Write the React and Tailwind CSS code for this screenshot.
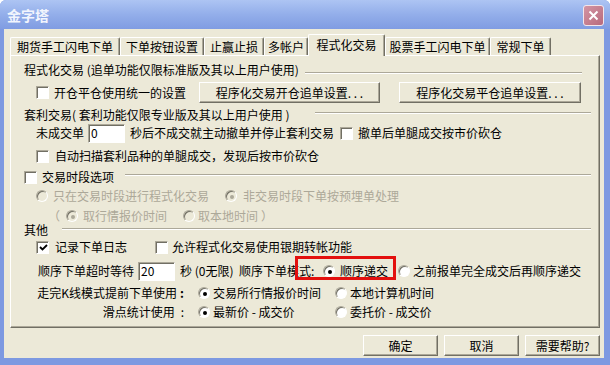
import React from 'react';

const Check = ({ checked, className = '' }) => (
  <span className={`flex h-[13px] w-[13px] shrink-0 items-center justify-center border border-t-[#aca899] border-l-[#aca899] border-r-white border-b-white bg-white shadow-[inset_1px_1px_0_#716f64] ${className}`}>
    {checked && (
      <svg width="9" height="9" viewBox="0 0 9 9" className="ml-px mt-px">
        <path d="M1 4 L3.5 6.5 L8 2" fill="none" stroke="#000" strokeWidth="1.8" />
      </svg>
    )}
  </span>
);

const Radio = ({ checked, disabled, className = '' }) => (
  <span className={`flex h-[12px] w-[12px] shrink-0 items-center justify-center rounded-full border border-t-[#aca899] border-l-[#aca899] border-r-white border-b-white shadow-[inset_1px_1px_0_#716f64] ${disabled ? 'bg-[#ece9d8]' : 'bg-white'} ${className}`}>
    {checked && <span className={`ml-px mt-px h-[4px] w-[4px] rounded-full ${disabled ? 'bg-[#aca899]' : 'bg-black'}`} />}
  </span>
);

const Etch = ({ className = '' }) => (
  <div className={`h-[2px] border-t border-b border-t-[#aca899] border-b-white ${className}`} />
);

const Btn = ({ children, className = '' }) => (
  <div className={`flex h-[21px] items-center justify-center border border-t-white border-l-white border-r-[#716f64] border-b-[#716f64] bg-[#ece9d8] shadow-[inset_-1px_-1px_0_#aca899] ${className}`}>
    {children}
  </div>
);

const Field = ({ value, className = '' }) => (
  <div className={`flex h-[19px] items-center border border-t-[#aca899] border-l-[#aca899] border-r-white border-b-white bg-white pl-[2px] shadow-[inset_1px_1px_0_#716f64] ${className}`}>
    {value}
  </div>
);

const tabs = [
  { label: '期货手工闪电下单', w: 'w-[110px]' },
  { label: '下单按钮设置', w: 'w-[84px]' },
  { label: '止赢止损', w: 'w-[60px]' },
  { label: '多帐户', w: 'w-[44px]' },
  { label: '程式化交易', w: 'w-[77px]', active: true },
  { label: '股票手工闪电下单', w: 'w-[105px]' },
  { label: '常规下单', w: 'w-[61px]' },
];

export default function App() {
  return (
    <div className="flex h-[365px] w-[610px] flex-col overflow-hidden rounded-t-[6px] bg-[#7d99e1] font-['Noto_Sans_CJK_SC','Noto_Sans',sans-serif] text-[12px] leading-[14px] text-black">
      {/* title bar */}
      <div className="flex h-[29px] shrink-0 items-center bg-gradient-to-b from-[#adc4f3] via-[#93aeea] to-[#809ce2]">
        <span className="pl-[7px] text-[14px] font-bold text-[#f2f5fd]">金字塔</span>
        <div className="ml-auto mr-[6px] mt-[2px] flex h-[21px] w-[21px] items-center justify-center rounded-[3px] border border-[#f3e6ea] bg-gradient-to-br from-[#d395a4] to-[#b86a7d]">
          <svg width="11" height="11" viewBox="0 0 11 11">
            <path d="M1.5 1.5 L9.5 9.5 M9.5 1.5 L1.5 9.5" stroke="#fff" strokeWidth="2" />
          </svg>
        </div>
      </div>

      {/* dialog body */}
      <div className="mb-[7px] ml-[4px] mr-[6px] flex flex-1 flex-col bg-[#ece9d8] pt-[5px]">
        {/* tabs */}
        <div className="flex h-[21px] items-end pl-[6px]">
          {tabs.map((t) =>
            t.active ? (
              <div
                key={t.label}
                className={`relative z-10 -mb-px flex h-[22px] ${t.w} items-start justify-center rounded-t-[2px] border-t border-l border-r border-t-white border-l-white border-r-[#716f64] bg-[#ece9d8] pt-[3px] shadow-[inset_-1px_0_0_#aca899]`}
              >
                {t.label}
              </div>
            ) : (
              <div
                key={t.label}
                className={`flex h-[18px] ${t.w} items-center justify-center rounded-t-[2px] border-t border-l border-r border-t-white border-l-white border-r-[#716f64] shadow-[inset_-1px_0_0_#aca899]`}
              >
                {t.label}
              </div>
            )
          )}
        </div>

        {/* tab panel */}
        <div className="ml-[6px] flex h-[273px] w-[590px] flex-col border border-t-white border-l-white border-r-[#716f64] border-b-[#716f64] shadow-[inset_-1px_-1px_0_#aca899]">
          {/* 程式化交易 */}
          <div className="mt-[6px] flex h-[16px] items-center pl-[13px]">
            <span>程式化交易 (追单功能仅限标准版及其以上用户使用)</span>
            <Etch className="ml-auto mr-[17px] mt-[6px] w-[277px]" />
          </div>
          <div className="mt-[4px] flex h-[21px] items-center pl-[25px]">
            <div className="flex w-[163px] items-center gap-[5px]">
              <Check />
              <span>开仓平仓使用统一的设置</span>
            </div>
            <Btn className="w-[181px]">程序化交易开仓追单设置. . .</Btn>
            <Btn className="ml-[19px] w-[182px]">程序化交易平仓追单设置. . .</Btn>
          </div>

          {/* 套利交易 */}
          <div className="mt-[4px] flex h-[16px] items-center pl-[13px]">
            <span>套利交易( 套利功能仅限专业版及其以上用户使用 )</span>
            <Etch className="mb-[4px] ml-auto mr-[8px] w-[276px]" />
          </div>
          <div className="flex h-[20px] items-center pl-[25px]">
            <span>未成交单</span>
            <Field value="0" className="ml-[4px] w-[37px]" />
            <span className="ml-[5px]">秒后不成交就主动撤单并停止套利交易</span>
            <Check className="ml-[6px]" />
            <span className="ml-[5px]">撤单后单腿成交按市价砍仓</span>
          </div>
          <div className="mt-[5px] flex h-[16px] items-center gap-[6px] pl-[25px]">
            <Check />
            <span>自动扫描套利品种的单腿成交，发现后按市价砍仓</span>
          </div>

          {/* 交易时段选项 */}
          <div className="mt-[5px] flex h-[16px] items-center pl-[13px]">
            <Check />
            <span className="ml-[5px]">交易时段选项</span>
            <Etch className="mb-[4px] ml-auto mr-[8px] w-[466px]" />
          </div>
          <div className="mt-[3px] flex h-[16px] items-center pl-[25px] text-[#aca899]">
            <Radio disabled />
            <span className="ml-[5px]">只在交易时段进行程式化交易</span>
            <Radio disabled checked className="ml-[16px]" />
            <span className="ml-[6px]">非交易时段下单按预埋单处理</span>
          </div>
          <div className="mt-[5px] flex h-[14px] items-center pl-[37px] text-[#aca899]">
            <span>（</span>
            <Radio disabled checked className="ml-[6px]" />
            <span className="ml-[5px]">取行情报价时间</span>
            <Radio disabled className="ml-[16px]" />
            <span className="ml-[3px]">取本地时间</span>
            <span className="ml-[3px]">）</span>
          </div>

          {/* 其他 */}
          <div className="flex h-[14px] items-center pl-[13px]">
            <span>其他</span>
            <Etch className="mb-[2px] ml-auto mr-[8px] w-[529px]" />
          </div>
          <div className="mt-[2px] flex h-[16px] items-center pl-[25px]">
            <Check checked />
            <span className="ml-[6px]">记录下单日志</span>
            <Check className="ml-[28px]" />
            <span className="ml-[4px]">允许程式化交易使用银期转帐功能</span>
          </div>
          <div className="relative mt-[6px] flex h-[20px] items-center pl-[27px]">
            <span>顺序下单超时等待</span>
            <Field value="20" className="ml-[4px] w-[37px]" />
            <span className="ml-[5px] w-[59px]">秒 (0无限)</span>
            <span className="w-[84px]">顺序下单模式:</span>
            <Radio checked />
            <span className="ml-[5px]">顺序递交</span>
            <Radio className="ml-[10px]" />
            <span className="ml-[3px]">之前报单完全成交后再顺序递交</span>
            <div className="absolute left-[284px] top-[-5px] h-[24px] w-[101px] border-[3px] border-[#e3100e]" />
          </div>
          <div className="mt-[4px] flex h-[16px] items-center pl-[25px]">
            <div className="flex w-[148px] shrink-0 justify-end whitespace-nowrap">
              走完K线模式提前下单使用<span className="ml-[3px] font-bold">:</span>
            </div>
            <div className="ml-[14px] flex w-[137px] items-center">
              <Radio checked />
              <span className="ml-[3px]">交易所行情报价时间</span>
            </div>
            <Radio />
            <span className="ml-[3px]">本地计算机时间</span>
          </div>
          <div className="mt-[3px] flex h-[16px] items-center pl-[25px]">
            <div className="flex w-[148px] shrink-0 justify-end whitespace-nowrap">
              滑点统计使用<span className="ml-[6px]">:</span>
            </div>
            <div className="ml-[14px] flex w-[137px] items-center">
              <Radio checked />
              <span className="ml-[3px]">最新价 - 成交价</span>
            </div>
            <Radio />
            <span className="ml-[3px]">委托价 - 成交价</span>
          </div>
        </div>

        {/* dialog buttons */}
        <div className="mt-[7px] flex justify-end gap-[6px] pr-[4px]">
          <Btn className="w-[75px]">确定</Btn>
          <Btn className="w-[75px]">取消</Btn>
          <Btn className="w-[75px]">需要帮助?</Btn>
        </div>
      </div>
    </div>
  );
}
